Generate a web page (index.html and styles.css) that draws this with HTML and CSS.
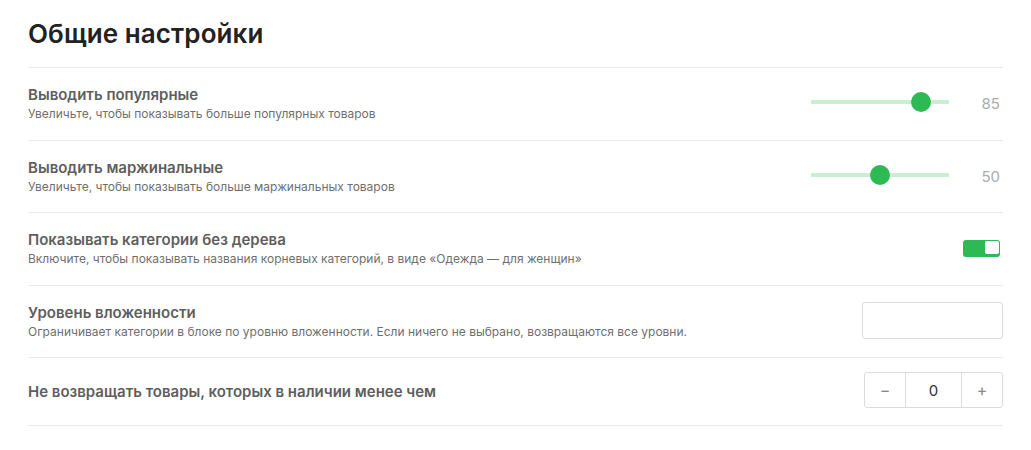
FILE: index.html
```html
<!DOCTYPE html>
<html lang="ru">
<head>
    <meta charset="UTF-8">
    <meta name="viewport" content="width=device-width, initial-scale=1.0">
    <title>Общие настройки</title>
    <link rel="stylesheet" href="styles.css">
</head>
<body>

<main class="settings">
    <h1 class="settings-title">Общие настройки</h1>

    <div class="setting-row">
        <div class="setting-text">
            <div class="setting-label">Выводить популярные</div>
            <div class="setting-hint">Увеличьте, чтобы показывать больше популярных товаров</div>
        </div>
        <div class="setting-control">
            <div class="slider">
                <div class="slider-track"></div>
                <div class="slider-thumb" style="--value: 0.85"></div>
            </div>
            <div class="slider-value">85</div>
        </div>
    </div>

    <div class="setting-row">
        <div class="setting-text">
            <div class="setting-label">Выводить маржинальные</div>
            <div class="setting-hint">Увеличьте, чтобы показывать больше маржинальных товаров</div>
        </div>
        <div class="setting-control">
            <div class="slider">
                <div class="slider-track"></div>
                <div class="slider-thumb" style="--value: 0.5"></div>
            </div>
            <div class="slider-value">50</div>
        </div>
    </div>

    <div class="setting-row">
        <div class="setting-text">
            <div class="setting-label">Показывать категории без дерева</div>
            <div class="setting-hint">Включите, чтобы показывать названия корневых категорий, в виде «Одежда — для женщин»</div>
        </div>
        <div class="setting-control">
            <div class="toggle is-on"><span class="toggle-knob"></span></div>
        </div>
    </div>

    <div class="setting-row">
        <div class="setting-text">
            <div class="setting-label">Уровень вложенности</div>
            <div class="setting-hint">Ограничивает категории в блоке по уровню вложенности. Если ничего не выбрано, возвращаются все уровни.</div>
        </div>
        <div class="setting-control">
            <input class="text-field" type="text">
        </div>
    </div>

    <div class="setting-row setting-row-short">
        <div class="setting-text">
            <div class="setting-label">Не возвращать товары, которых в наличии менее чем</div>
        </div>
        <div class="setting-control">
            <div class="stepper">
                <button class="stepper-btn" type="button">&minus;</button>
                <div class="stepper-value">0</div>
                <button class="stepper-btn" type="button">+</button>
            </div>
        </div>
    </div>
</main>

</body>
</html>
```

FILE: styles.css
```css
body {
    margin: 0;
    padding: 0;
    font-family: Inter, "Noto Sans", sans-serif;
    background: #fff;
    color: #222;
}
.settings {
    width: 975px;
    padding: 18px 0 0 28px;
}
.settings-title {
    margin: 0 0 17px;
    font-size: 26px;
    line-height: 32px;
    font-weight: 600;
    letter-spacing: 0.1px;
    color: #222;
}
.setting-row {
    display: flex;
    align-items: center;
    justify-content: space-between;
    min-height: 72.5px;
    box-sizing: border-box;
    border-top: 1px solid #ebebeb;
}
.setting-row:last-child {
    border-bottom: 1px solid #ebebeb;
}
.setting-row-short {
    min-height: 69px;
}
.setting-label {
    font-size: 15px;
    line-height: 20px;
    font-weight: 600;
    color: #5e5e5e;
}
.setting-hint {
    margin-top: 1px;
    font-size: 12px;
    line-height: 16px;
    color: #6f6f6f;
}
.setting-control {
    display: flex;
    align-items: center;
}

/* slider */
.slider {
    position: relative;
    width: 138px;
    height: 20px;
    margin-top: -3px;
}
.slider-track {
    position: absolute;
    left: 0;
    right: 0;
    top: 8px;
    height: 4px;
    background: #c9eed3;
}
.slider-thumb {
    position: absolute;
    top: 0;
    left: calc(var(--value) * (100% - 20px));
    width: 20px;
    height: 20px;
    border-radius: 50%;
    background: #2dba55;
}
.slider-value {
    width: 51px;
    margin-right: 3px;
    text-align: right;
    font-size: 15px;
    color: #ababab;
}

/* toggle */
.toggle {
    display: flex;
    justify-content: flex-end;
    width: 35px;
    height: 15px;
    padding: 1px;
    margin-right: 3px;
    border-radius: 3px;
    background: #e0e0e0;
}
.toggle.is-on {
    background: #2dba55;
}
.toggle-knob {
    width: 14px;
    height: 13px;
    border-radius: 2px;
    background: #fff;
}

/* text field */
.text-field {
    width: 141px;
    height: 37px;
    box-sizing: border-box;
    margin: 0 0 2px;
    border: 1px solid #dcdcdc;
    border-radius: 3px;
    font-family: inherit;
    font-size: 14px;
    padding: 0 10px;
}

/* stepper */
.stepper {
    display: flex;
    width: 139px;
    height: 36px;
    box-sizing: border-box;
    margin-top: -3px;
    border: 1px solid #dcdcdc;
    border-radius: 3px;
}
.stepper-btn {
    width: 40px;
    border: none;
    background: #fff;
    font-family: inherit;
    font-size: 16px;
    color: #888;
    padding: 0;
    cursor: pointer;
    border-radius: 3px;
}
.stepper-value {
    flex: 1;
    display: flex;
    align-items: center;
    justify-content: center;
    border-left: 1px solid #dcdcdc;
    border-right: 1px solid #dcdcdc;
    font-size: 15px;
    color: #333;
}
```
